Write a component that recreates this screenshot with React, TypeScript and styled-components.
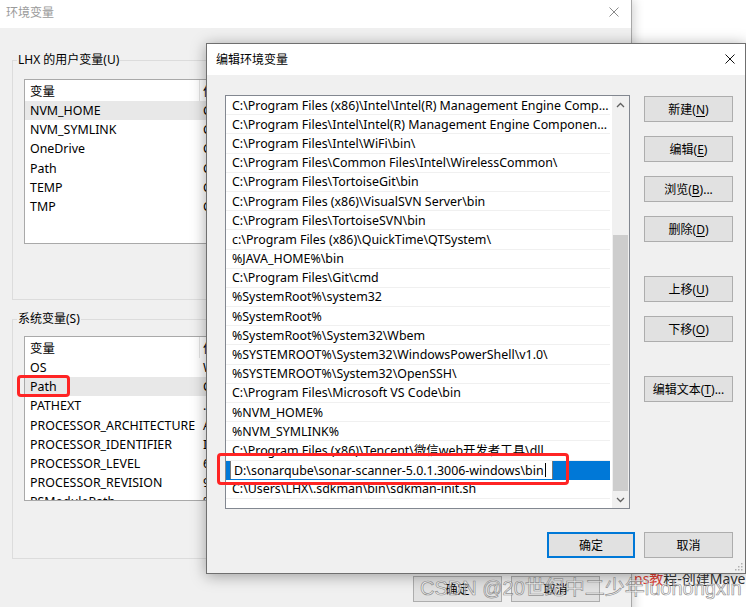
import React from 'react'
import styled, { createGlobalStyle } from 'styled-components'

const GlobalStyle = createGlobalStyle`
  html, body {
    margin: 0;
    padding: 0;
  }
  body {
    background: #fff;
    font-family: "Noto Sans", "Noto Sans CJK SC", sans-serif;
    font-size: 12px;
    color: #000;
  }
`

const Desktop = styled.div`
  position: relative;
  width: 746px;
  height: 607px;
  overflow: hidden;
  background: #fff;
`

const PageText = styled.div`
  position: absolute;
  left: 634px;
  top: 568px;
  font-size: 14px;
  white-space: nowrap;
  color: #333;
  span { color: #e33e33; }
`

// ---------- back window: 环境变量 ----------

const BackWindow = styled.div`
  position: absolute;
  left: 0;
  top: 0;
  width: 631px;
  height: 640px;
  display: flex;
  flex-direction: column;
  background: #f0f0f0;
  border-right: 1px solid #a8a8a8;
  box-shadow: 2px 0 10px rgba(0, 0, 0, 0.18);
`

const TitleBar = styled.div<{ $active?: boolean }>`
  height: ${p => (p.$active ? 31 : 28)}px;
  box-sizing: border-box;
  flex: none;
  display: flex;
  align-items: center;
  justify-content: space-between;
  padding: 0 ${p => (p.$active ? 10 : 12)}px ${p => (p.$active ? 1 : 4)}px ${p => (p.$active ? 9 : 6)}px;
  background: #fff;
  color: ${p => (p.$active ? '#000' : '#9a9a9a')};
  font-size: 12px;
`

const BackBody = styled.div`
  display: flex;
  flex-direction: column;
  padding: 24px 11px 0 12px;
`

const Group = styled.fieldset<{ $bottom: number; $top?: number }>`
  margin: ${p => p.$top ?? 0}px 0 0 0;
  padding: 0 11px ${p => p.$bottom}px 11px;
  border: 1px solid #dcdcdc;
  min-width: 0;
`

const Legend = styled.legend`
  margin-left: -7px;
  padding: 0 1px;
  line-height: 16px;
  font-size: 12px;
  color: #000;
`

const VarList = styled.div<{ $top: number }>`
  margin-top: ${p => p.$top}px;
  height: 165px;
  box-sizing: border-box;
  border: 1px solid #a9a9a9;
  background: #fff;
  overflow: hidden;
  font-size: 12.4px;
`

const VarRow = styled.div<{ $header?: boolean; $hot?: boolean }>`
  display: flex;
  height: ${p => (p.$header ? 21 : 19.2)}px;
  align-items: center;
  background: ${p => (p.$hot ? '#e8e8e8' : 'transparent')};
  white-space: nowrap;
`

const NameCell = styled.div<{ $header?: boolean }>`
  width: 175px;
  flex: none;
  box-sizing: border-box;
  padding-left: 5px;
  overflow: hidden;
  align-self: stretch;
  display: flex;
  align-items: center;
  border-right: 1px solid ${p => (p.$header ? '#e5e5e5' : 'transparent')};
`

const ValueCell = styled.div`
  padding-left: 3px;
  overflow: hidden;
`

const ButtonRow = styled.div<{ $top: number; $right: number; $gap: number }>`
  display: flex;
  justify-content: flex-end;
  gap: ${p => p.$gap}px;
  margin-top: ${p => p.$top}px;
  padding-right: ${p => p.$right}px;
`

const Button = styled.button<{ $default?: boolean; $space?: boolean }>`
  width: ${p => (p.$default ? 88 : 89)}px;
  height: 26px;
  flex: none;
  margin-top: ${p => (p.$space ? 20 : 0)}px;
  padding: 0;
  background: #e1e1e1;
  border: 1px solid ${p => (p.$default ? '#0078d7' : '#adadad')};
  box-shadow: ${p => (p.$default ? 'inset 0 0 0 1px #0078d7' : 'none')};
  font-family: "Noto Sans", "Noto Sans CJK SC", sans-serif;
  font-size: 12px;
  color: #000;
  u { text-underline-offset: 2px; }
`

// red marker boxes drawn over the screenshot
const RedMark = styled.div<{ $x: number; $y: number; $w: number; $h: number }>`
  position: absolute;
  left: ${p => p.$x}px;
  top: ${p => p.$y}px;
  width: ${p => p.$w}px;
  height: ${p => p.$h}px;
  box-sizing: border-box;
  border: 3px solid #ff2424;
  border-radius: 4px;
`

// ---------- front dialog: 编辑环境变量 ----------

const Dialog = styled.div`
  position: absolute;
  left: 206px;
  top: 43px;
  width: 540px;
  height: 531px;
  box-sizing: border-box;
  display: flex;
  flex-direction: column;
  background: #f0f0f0;
  border: 1px solid #6f6f6f;
  box-shadow: 0 2px 14px rgba(0, 0, 0, 0.35);
`

const DialogBody = styled.div`
  display: flex;
  flex-direction: column;
  padding: 20px 12px 0 18px;
`

const MainRow = styled.div`
  display: flex;
  gap: 14px;
`

const PathList = styled.div`
  width: 405px;
  height: 414px;
  box-sizing: border-box;
  display: flex;
  border: 1px solid #828790;
  background: #fff;
  font-size: 12.4px;
`

const PathRows = styled.div`
  flex: 1;
  padding-right: 2px;
  overflow: hidden;
`

const PathRow = styled.div<{ $selected?: boolean }>`
  height: 19.2px;
  box-sizing: border-box;
  display: flex;
  align-items: center;
  padding-left: ${p => (p.$selected ? 4 : 6)}px;
  border-bottom: 1px solid ${p => (p.$selected ? '#0078d7' : '#f0f0f0')};
  background: ${p => (p.$selected ? '#0078d7' : '#fff')};
  white-space: nowrap;
  overflow: hidden;
`

const EditBox = styled.div`
  height: 20px;
  margin-top: 1px;
  box-sizing: border-box;
  display: flex;
  align-items: center;
  padding: 0 6px 0 3px;
  background: #fff;
  border: 1px solid #7a7a7a;
`

const Caret = styled.span`
  width: 1px;
  height: 14px;
  margin-left: 1px;
  background: #000;
`

const Scrollbar = styled.div`
  width: 17px;
  flex: none;
  display: flex;
  flex-direction: column;
  background: #f0f0f0;
`

const ScrollArrow = styled.div`
  height: 17px;
  flex: none;
  display: flex;
  align-items: center;
  justify-content: center;
`

const ScrollTrack = styled.div`
  flex: 1;
  display: flex;
  flex-direction: column;
  justify-content: flex-end;
`

const ScrollThumb = styled.div`
  height: 256px;
  margin: 0 1px;
  background: #cdcdcd;
`

const SideButtons = styled.div`
  display: flex;
  flex-direction: column;
  gap: 14px;
  padding-top: 1px;
`

const Grip = styled.svg`
  position: absolute;
  right: 2px;
  bottom: 2px;
`

const Watermark = styled.div`
  position: absolute;
  left: 420px;
  top: 572px;
  font-family: "Liberation Sans", "Noto Sans CJK SC", sans-serif;
  font-size: 20px;
  white-space: nowrap;
  color: rgba(255, 255, 255, 0.55);
  -webkit-text-stroke: 0.7px rgba(110, 110, 110, 0.75);
`

const CloseIcon = ({ color }: { color: string }) => (
  <svg width='10' height='10' viewBox='0 0 10 10'>
    <path d='M0.5 0.5 L9.5 9.5 M9.5 0.5 L0.5 9.5' stroke={color} strokeWidth='1' fill='none' />
  </svg>
)

const Chevron = ({ up }: { up?: boolean }) => (
  <svg width='9' height='6' viewBox='0 0 9 6'>
    <path d={up ? 'M1 5 L4.5 1.5 L8 5' : 'M1 1 L4.5 4.5 L8 1'} stroke='#606060' strokeWidth='1.3' fill='none' />
  </svg>
)

const userVars = [
  ['NVM_HOME', 'C:\\Users\\LHX\\AppData\\Roaming\\nvm'],
  ['NVM_SYMLINK', 'C:\\Program Files\\nodejs'],
  ['OneDrive', 'C:\\Users\\LHX\\OneDrive'],
  ['Path', 'C:\\Users\\LHX\\AppData\\Local\\Microsoft\\WindowsApps'],
  ['TEMP', 'C:\\Users\\LHX\\AppData\\Local\\Temp'],
  ['TMP', 'C:\\Users\\LHX\\AppData\\Local\\Temp'],
]

const systemVars = [
  ['OS', 'Windows_NT'],
  ['Path', 'C:\\Program Files (x86)\\Intel\\Intel(R) Management'],
  ['PATHEXT', '.COM;.EXE;.BAT;.CMD;.VBS'],
  ['PROCESSOR_ARCHITECTURE', 'AMD64'],
  ['PROCESSOR_IDENTIFIER', 'Intel64 Family 6 Model 142'],
  ['PROCESSOR_LEVEL', '6'],
  ['PROCESSOR_REVISION', '9e0a'],
  ['PSModulePath', '%ProgramFiles%\\WindowsPowerShell\\Modules'],
]

const paths = [
  'C:\\Program Files (x86)\\Intel\\Intel(R) Management Engine Comp...',
  'C:\\Program Files\\Intel\\Intel(R) Management Engine Componen...',
  'C:\\Program Files\\Intel\\WiFi\\bin\\',
  'C:\\Program Files\\Common Files\\Intel\\WirelessCommon\\',
  'C:\\Program Files\\TortoiseGit\\bin',
  'C:\\Program Files (x86)\\VisualSVN Server\\bin',
  'C:\\Program Files\\TortoiseSVN\\bin',
  'c:\\Program Files (x86)\\QuickTime\\QTSystem\\',
  '%JAVA_HOME%\\bin',
  'C:\\Program Files\\Git\\cmd',
  '%SystemRoot%\\system32',
  '%SystemRoot%',
  '%SystemRoot%\\System32\\Wbem',
  '%SYSTEMROOT%\\System32\\WindowsPowerShell\\v1.0\\',
  '%SYSTEMROOT%\\System32\\OpenSSH\\',
  'C:\\Program Files\\Microsoft VS Code\\bin',
  '%NVM_HOME%',
  '%NVM_SYMLINK%',
  'C:\\Program Files (x86)\\Tencent\\微信web开发者工具\\dll',
  'D:\\sonarqube\\sonar-scanner-5.0.1.3006-windows\\bin',
  'C:\\Users\\LHX\\.sdkman\\bin\\sdkman-init.sh',
]
const editing = 19

const sideButtons: { label: string; key: string; tail?: string; space?: boolean }[] = [
  { label: '新建', key: 'N' },
  { label: '编辑', key: 'E' },
  { label: '浏览', key: 'B', tail: '...' },
  { label: '删除', key: 'D' },
  { label: '上移', key: 'U', space: true },
  { label: '下移', key: 'O' },
  { label: '编辑文本', key: 'T', tail: '...', space: true },
]

const VarTable = ({ rows, hot, top }: { rows: string[][]; hot: number; top: number }) => (
  <VarList $top={top}>
    <VarRow $header>
      <NameCell $header>变量</NameCell>
      <ValueCell>值</ValueCell>
    </VarRow>
    {rows.map(([name, value], i) => (
      <VarRow key={name + i} $hot={i === hot}>
        <NameCell>{name}</NameCell>
        <ValueCell>{value}</ValueCell>
      </VarRow>
    ))}
  </VarList>
)

const App: React.FC = () => {
  return (
    <Desktop>
      <GlobalStyle />
      <PageText><span>ns教</span>程-创建Maven</PageText>

      <BackWindow>
        <TitleBar>
          <span>环境变量</span>
          <CloseIcon color='#8a8a8a' />
        </TitleBar>
        <BackBody>
          <Group $bottom={55}>
            <Legend>LHX 的用户变量(U)</Legend>
            <VarTable rows={userVars} hot={0} top={11} />
          </Group>
          <Group $bottom={57} $top={11}>
            <Legend>系统变量(S)</Legend>
            <VarTable rows={systemVars} hot={1} top={9} />
          </Group>
          <ButtonRow $top={17} $right={20} $gap={9}>
            <Button>确定</Button>
            <Button>取消</Button>
          </ButtonRow>
        </BackBody>
        <RedMark $x={17} $y={375} $w={53} $h={22} />
      </BackWindow>

      <Dialog>
        <TitleBar $active>
          <span>编辑环境变量</span>
          <CloseIcon color='#111' />
        </TitleBar>
        <DialogBody>
          <MainRow>
            <PathList>
              <PathRows>
                {paths.map((p, i) =>
                  i === editing ? (
                    <PathRow key={i} $selected>
                      <EditBox>{p}<Caret /></EditBox>
                    </PathRow>
                  ) : (
                    <PathRow key={i}>{p}</PathRow>
                  )
                )}
              </PathRows>
              <Scrollbar>
                <ScrollArrow><Chevron up /></ScrollArrow>
                <ScrollTrack><ScrollThumb /></ScrollTrack>
                <ScrollArrow><Chevron /></ScrollArrow>
              </Scrollbar>
            </PathList>
            <SideButtons>
              {sideButtons.map(b => (
                <Button key={b.key} $space={b.space}>
                  {b.label}(<u>{b.key}</u>){b.tail}
                </Button>
              ))}
            </SideButtons>
          </MainRow>
          <ButtonRow $top={23} $right={0} $gap={9}>
            <Button $default>确定</Button>
            <Button>取消</Button>
          </ButtonRow>
        </DialogBody>
        <RedMark $x={10} $y={409} $w={352} $h={32} />
        <Grip width='10' height='10' viewBox='0 0 10 10'>
          {[[8, 2], [8, 5], [5, 5], [8, 8], [5, 8], [2, 8]].map(([x, y]) => (
            <rect key={`${x}-${y}`} x={x} y={y} width='1.5' height='1.5' fill='#b0b0b0' />
          ))}
        </Grip>
      </Dialog>

      <Watermark>CSDN @20世纪中二少年luohongxin</Watermark>
    </Desktop>
  )
}

export default App
